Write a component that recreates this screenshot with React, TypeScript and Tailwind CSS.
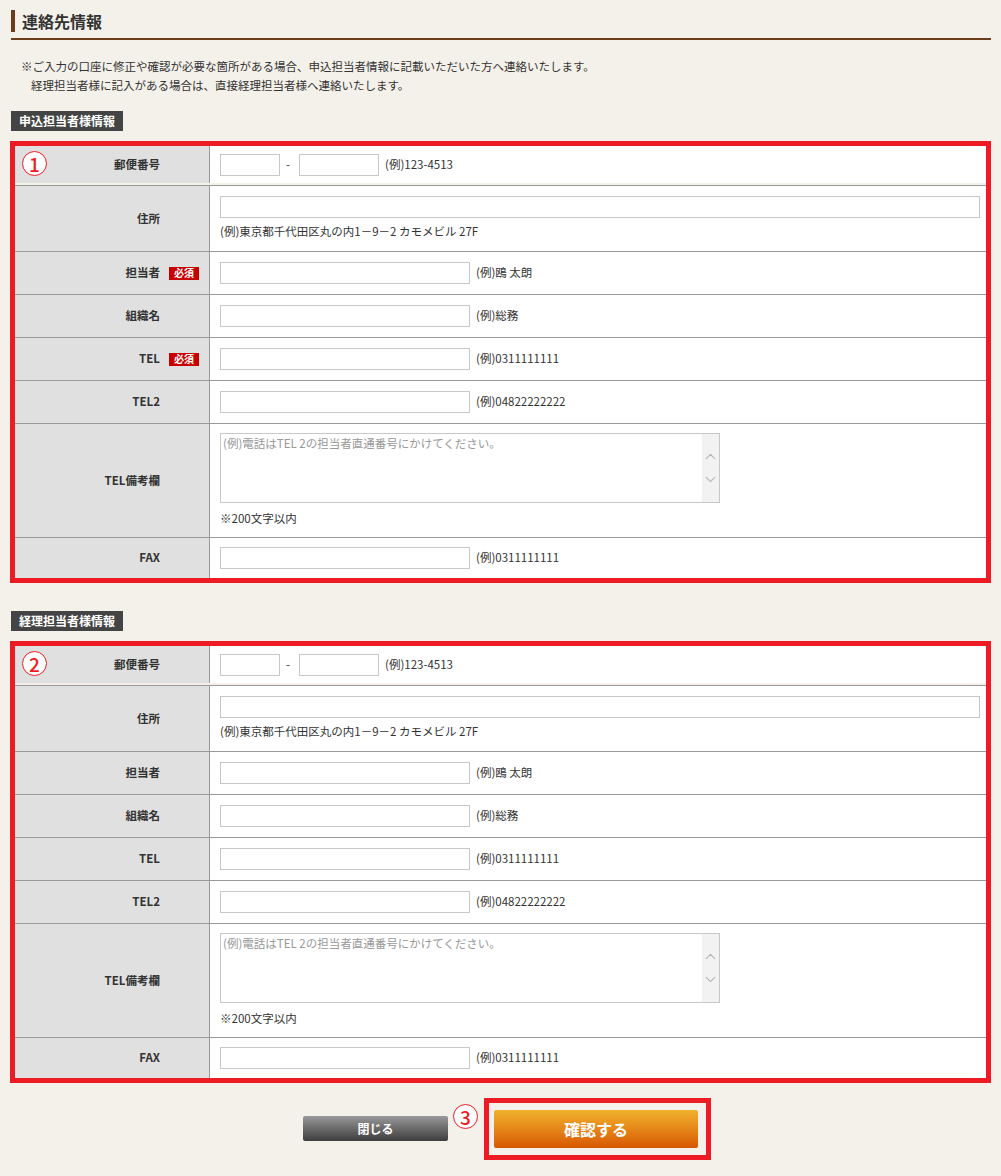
import { ChevronDown, ChevronUp } from 'lucide-react'

const FONT = { fontFamily: '"Noto Sans CJK JP", "Noto Sans", sans-serif' }

function Badge() {
  return (
    <span className="ml-[9px] flex h-[13px] w-[30px] items-center justify-center bg-[#c80000] text-[10px] leading-none text-white">
      必須
    </span>
  )
}

function Circled({ n }: { n: string }) {
  return (
    <span className="flex h-[25px] w-[25px] items-center justify-center rounded-full border-[1.5px] border-[#ed1c24] bg-white text-[19px] font-medium leading-none text-[#ed1c24]">
      {n}
    </span>
  )
}

interface RowProps {
  label: string
  required?: boolean
  className: string
  children: React.ReactNode
}

function Row({ label, required = false, className, children }: RowProps) {
  return (
    <div className={`flex ${className}`}>
      <div className="flex w-[195px] flex-shrink-0 items-center justify-end border-r border-[#999] bg-[#e0e0e0] pr-[10px] text-[11.5px] font-bold text-[#333]">
        <span>{label}</span>
        <span className="flex w-[39px] items-center">{required && <Badge />}</span>
      </div>
      <div className="flex flex-1 flex-col justify-center bg-white pl-[10px] pr-[6px] text-[11.5px] text-[#333]">
        {children}
      </div>
    </div>
  )
}

function TextInput({ className }: { className: string }) {
  return (
    <input
      type="text"
      className={`h-[22px] border border-[#c8c8c8] bg-white outline-none ${className}`}
    />
  )
}

function Example({ text }: { text: string }) {
  return <span className="ml-[6px] whitespace-nowrap">{text}</span>
}

function ContactTable({ mark, required }: { mark: string; required: boolean }) {
  return (
    <div className="relative border-[5px] border-[#ed1c24]">
      <div className="absolute left-[7px] top-[5px] z-10">
        <Circled n={mark} />
      </div>

      {/* MARK: zip */}
      <Row label="郵便番号" className="h-[39px] pb-[2px]">
        <div className="flex items-center">
          <TextInput className="w-[60px]" />
          <span className="mx-[6px] w-[7px]">-</span>
          <TextInput className="w-[80px]" />
          <Example text="(例)123-4513" />
        </div>
      </Row>

      {/* MARK: address */}
      <Row label="住所" className="h-[66px] border-t border-[#999]">
        <TextInput className="mr-[4px] w-full" />
        <span className="mt-[4px] leading-[19px]">(例)東京都千代田区丸の内1－9－2 カモメビル 27F</span>
      </Row>

      <Row label="担当者" required={required} className="h-[43px] border-t border-[#999]">
        <div className="flex items-center">
          <TextInput className="w-[250px]" />
          <Example text="(例)鴎 太朗" />
        </div>
      </Row>

      <Row label="組織名" className="h-[43px] border-t border-[#999]">
        <div className="flex items-center">
          <TextInput className="w-[250px]" />
          <Example text="(例)総務" />
        </div>
      </Row>

      <Row label="TEL" required={required} className="h-[43px] border-t border-[#999]">
        <div className="flex items-center">
          <TextInput className="w-[250px]" />
          <Example text="(例)0311111111" />
        </div>
      </Row>

      <Row label="TEL2" className="h-[43px] border-t border-[#999]">
        <div className="flex items-center">
          <TextInput className="w-[250px]" />
          <Example text="(例)04822222222" />
        </div>
      </Row>

      {/* MARK: note */}
      <Row label="TEL備考欄" className="h-[114px] border-t border-[#999]">
        <div className="relative h-[70px] w-[500px]">
          <textarea
            className="h-full w-full resize-none border border-[#c8c8c8] bg-white px-[2px] py-[1px] pr-[20px] text-[11.5px] leading-[16px] outline-none placeholder:text-[#999]"
            placeholder="(例)電話はTEL 2の担当者直通番号にかけてください。"
          />
          <div className="absolute bottom-[1px] right-[1px] top-[1px] flex w-[17px] flex-col items-center justify-center gap-[6px] bg-[#f2f2f2] text-[#b4b4b4]">
            <ChevronUp size={17} strokeWidth={1.6} />
            <ChevronDown size={17} strokeWidth={1.6} />
          </div>
        </div>
        <span className="mt-[6px] leading-[19px]">※200文字以内</span>
      </Row>

      <Row label="FAX" className="h-[41px] border-t border-[#999]">
        <div className="flex items-center">
          <TextInput className="w-[250px]" />
          <Example text="(例)0311111111" />
        </div>
      </Row>
    </div>
  )
}

function SectionLabel({ text }: { text: string }) {
  return (
    <div className="ml-[1px] flex h-[20px] items-center bg-[#444] px-[8px] text-[12px] font-bold leading-none text-white">
      {text}
    </div>
  )
}

export default function App() {
  return (
    <div className="min-h-[1176px] bg-[#f4f1ea] px-[10px] pb-[16px] pt-[10px] text-[#333]" style={FONT}>
      {/* MARK: heading */}
      <div className="ml-[1px] flex h-[22px] items-center">
        <span className="h-full w-[4px] bg-[#6b3d1b]" />
        <h2 className="ml-[7px] text-[16px] font-bold leading-none text-[#333]">連絡先情報</h2>
      </div>
      <div className="ml-[1px] mt-[6px] h-[2px] bg-[#6b3d1b]" />

      <div className="mt-[17px] text-[11.5px] leading-[19px]">
        <p className="pl-[11px]">
          ※ご入力の口座に修正や確認が必要な箇所がある場合、申込担当者情報に記載いただいた方へ連絡いたします。
        </p>
        <p className="pl-[21px]">経理担当者様に記入がある場合は、直接経理担当者様へ連絡いたします。</p>
      </div>

      <div className="mt-[16px] flex">
        <SectionLabel text="申込担当者様情報" />
      </div>
      <div className="mt-[10px]">
        <ContactTable mark="1" required />
      </div>

      <div className="mt-[28px] flex">
        <SectionLabel text="経理担当者様情報" />
      </div>
      <div className="mt-[10px]">
        <ContactTable mark="2" required={false} />
      </div>

      {/* MARK: buttons */}
      <div className="mt-[15px] flex items-start pl-[293px]">
        <button className="mt-[18px] flex h-[25px] w-[145px] items-center justify-center rounded-[2px] bg-gradient-to-b from-[#9a9a9a] to-[#3e3e3e] text-[12px] font-bold text-white">
          閉じる
        </button>
        <span className="ml-[5px] mt-[6px]">
          <Circled n="3" />
        </span>
        <div className="ml-[6px] border-[5px] border-[#ed1c24] pb-[7px] pl-[5px] pr-[8px] pt-[7px]">
          <button className="flex h-[38px] w-[204px] items-center justify-center rounded-[2px] bg-gradient-to-b from-[#f0b22c] to-[#d75600] text-[16px] font-bold text-white">
            確認する
          </button>
        </div>
      </div>
    </div>
  )
}
